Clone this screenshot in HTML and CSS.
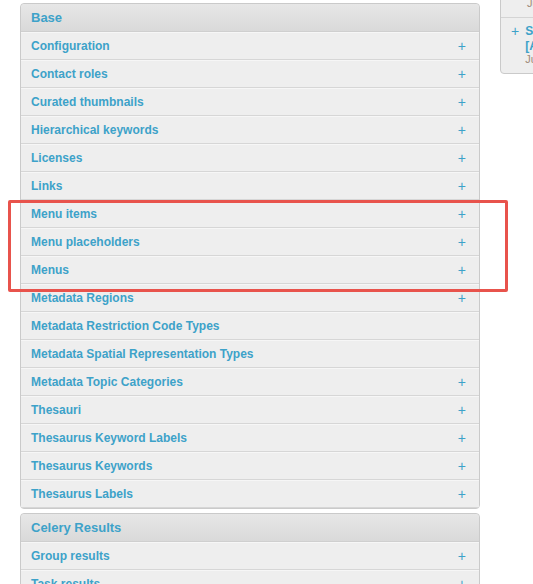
FILE: index.html
```html
<!DOCTYPE html>
<html>
<head>
<meta charset="utf-8">
<link rel="stylesheet" href="styles.css">
</head>
<body>
<div class="page">
  <div class="main">
    <div class="module">
      <div class="module-head">Base</div>
      <div class="row"><span class="name">Configuration</span><span class="add">+</span></div>
      <div class="row"><span class="name">Contact roles</span><span class="add">+</span></div>
      <div class="row"><span class="name">Curated thumbnails</span><span class="add">+</span></div>
      <div class="row"><span class="name">Hierarchical keywords</span><span class="add">+</span></div>
      <div class="row"><span class="name">Licenses</span><span class="add">+</span></div>
      <div class="row"><span class="name">Links</span><span class="add">+</span></div>
      <div class="row"><span class="name">Menu items</span><span class="add">+</span></div>
      <div class="row"><span class="name">Menu placeholders</span><span class="add">+</span></div>
      <div class="row"><span class="name">Menus</span><span class="add">+</span></div>
      <div class="row"><span class="name">Metadata Regions</span><span class="add">+</span></div>
      <div class="row"><span class="name">Metadata Restriction Code Types</span></div>
      <div class="row"><span class="name">Metadata Spatial Representation Types</span></div>
      <div class="row"><span class="name">Metadata Topic Categories</span><span class="add">+</span></div>
      <div class="row"><span class="name">Thesauri</span><span class="add">+</span></div>
      <div class="row"><span class="name">Thesaurus Keyword Labels</span><span class="add">+</span></div>
      <div class="row"><span class="name">Thesaurus Keywords</span><span class="add">+</span></div>
      <div class="row"><span class="name">Thesaurus Labels</span><span class="add">+</span></div>
      <div class="highlight"></div>
    </div>
    <div class="module">
      <div class="module-head">Celery Results</div>
      <div class="row"><span class="name">Group results</span><span class="add">+</span></div>
      <div class="row"><span class="name">Task results</span><span class="add">+</span></div>
    </div>
  </div>
  <div class="side">
    <div class="recent">
      <div class="recent-item first">
        <div class="r-date">June 2023</div>
      </div>
      <div class="recent-item">
        <span class="r-icon">+</span>
        <div class="r-body">
          <div class="r-title">Sample</div>
          <div class="r-link">[Add]</div>
          <div class="r-date">June 2023</div>
        </div>
      </div>
    </div>
  </div>
</div>
</body>
</html>
```

FILE: styles.css
```css
html, body {
  margin: 0;
  padding: 0;
  overflow: hidden;
  background: #ffffff;
  font-family: "Liberation Sans", Arial, sans-serif;
}

.page {
  display: flex;
  align-items: flex-start;
  gap: 20px;
  padding: 3px 0 0 20px;
  width: 760px;
}

.main {
  width: 460px;
  flex: none;
  display: flex;
  flex-direction: column;
  gap: 4px;
}

.module {
  position: relative;
  border: 1px solid #cacaca;
  border-radius: 4px;
  background: #eeeeee;
}

.module-head {
  height: 27px;
  line-height: 27px;
  padding-left: 10px;
  font-size: 13px;
  font-weight: bold;
  color: #3da2c9;
  background: linear-gradient(to bottom, #e7e7e7, #d9d9d9);
  border-bottom: 1px solid #cfcfcf;
  border-radius: 4px 4px 0 0;
}

.row {
  display: flex;
  justify-content: space-between;
  align-items: center;
  height: 26px;
  padding: 0 13px 0 10px;
  border-top: 1px solid #f6f6f6;
  border-bottom: 1px solid #d6d6d6;
  background: #eeeeee;
}

.row:last-of-type {
  border-bottom: none;
  border-radius: 0 0 4px 4px;
}

.name {
  font-size: 12px;
  font-weight: bold;
  color: #3da2c9;
}

.add {
  font-size: 14px;
  font-weight: normal;
  color: #3da2c9;
  line-height: 1;
}

.highlight {
  position: absolute;
  left: -13px;
  top: 196px;
  width: 494px;
  height: 86px;
  border: 3px solid #e8534c;
  border-radius: 2px;
  pointer-events: none;
}

.side {
  width: 220px;
  flex: none;
  margin-top: -17px;
}

.recent {
  border: 1px solid #cacaca;
  border-radius: 4px;
  background: #eeeeee;
}

.recent-item {
  display: flex;
  gap: 6px;
  padding: 3px 10px 8px 10px;
}

.recent-item.first {
  height: 31px;
  box-sizing: border-box;
  padding-top: 10px;
  border-bottom: 1px solid #d4d4d4;
  padding-left: 26px;
}

.r-icon {
  font-size: 14px;
  color: #3da2c9;
  line-height: 14px;
  padding-top: 3px;
}

.r-body {
  display: flex;
  flex-direction: column;
}

.r-title {
  font-size: 12px;
  font-weight: bold;
  color: #3da2c9;
  line-height: 16px;
  padding-top: 2px;
}

.r-link {
  font-size: 12px;
  font-weight: bold;
  color: #3da2c9;
  line-height: 14px;
}

.r-date {
  font-size: 11px;
  color: #a08a78;
  line-height: 12px;
}
```
